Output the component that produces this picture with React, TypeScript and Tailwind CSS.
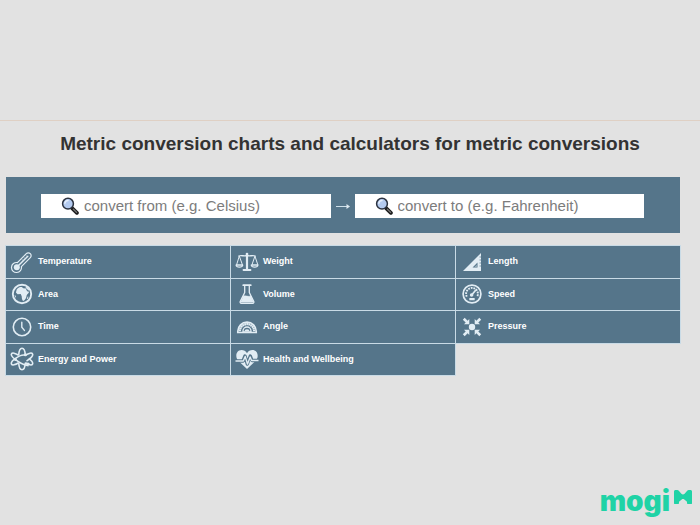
import { useState, ReactNode } from 'react'

interface Category {
  label: string
  href: string
  icon: ReactNode
}

const TemperatureIcon = () => (
  <svg viewBox="0 0 24 24" className="size-6" fill="none" stroke="currentColor" strokeLinecap="round">
    <path d="M16.300 3.700a2.800 2.800 0 0 1 4 4L11.400 16.600a5 5 0 1 1-4-4z" strokeWidth="1.200" />
    <path d="M17.800 6.200 8 16" strokeWidth="1.500" />
    <circle cx="6.800" cy="17.200" r="3" fill="currentColor" stroke="none" />
    <path d="m12.200 9.600 1 1M14.200 7.600l1 1M16.200 5.600l1 1" strokeWidth="0.600" />
  </svg>
)

const WeightIcon = () => (
  <svg viewBox="0 0 24 24" className="size-6" fill="none" stroke="currentColor" strokeLinecap="round" strokeLinejoin="round">
    <path d="M12 4v15" strokeWidth="2.200" />
    <circle cx="12" cy="4" r="1.300" fill="currentColor" stroke="none" />
    <path d="M3.800 6c3-1.400 5.400 1 8.200-.6 2.800 1.600 5.200-.8 8.200.6" strokeWidth="1.300" />
    <path d="M4.200 6.500 1.500 15h5.600zM19.800 6.500 16.900 15h5.600z" strokeWidth="1" />
    <path d="M1 15h6.800c-.5 2.800-6.300 2.800-6.800 0zM16.200 15H23c-.5 2.800-6.300 2.800-6.800 0z" strokeWidth="1.200" />
    <path d="M8.500 20h7" strokeWidth="1.800" />
  </svg>
)

const LengthIcon = () => (
  <svg viewBox="0 0 24 24" className="size-6" fill="currentColor" fillRule="evenodd">
    <path d="M21 3v18H3zM17.500 12.500 12.500 17.500h5z" />
    <path d="M21 7h-1.500M21 10h-1.500M21 13h-1.500M21 16h-1.500" stroke="#55758a" strokeWidth="0.700" />
    <path d="m16.800 14.500-2.300 2.500h2.300z" opacity="0.500" />
  </svg>
)

const AreaIcon = () => (
  <svg viewBox="0 0 24 24" className="size-6" fill="none">
    <circle cx="12" cy="12" r="9.200" stroke="currentColor" strokeWidth="1.900" />
    <path
      d="M6.800 7.300c1.500-1.800 3-2.300 5-2.200l1.500 1.200 2.500.3 1.300 2.700 1.900.5c-.1 1.500-1.500 2.300-2.300 3.400l-.5 2.400c-.7 1.900-1.800 3-3.100 3.400-1.200-1.500-1.300-3.200-1.400-4.800l-1-2.200-3.100.2-1.700-1.700z"
      fill="currentColor"
    />
    <path d="m17.700 14.500.8.200-.9 2.500-.8-.4zM4.500 13l1.500 1-.1 2z" fill="currentColor" />
    <path d="M15.800 5.300c1.400.6 2.500 1.700 3 3" stroke="currentColor" strokeWidth="1.400" />
  </svg>
)

const VolumeIcon = () => (
  <svg viewBox="0 0 24 24" className="size-6" fill="none" stroke="currentColor" strokeLinejoin="round" strokeLinecap="round">
    <path d="M8.200 3.200h7.600" strokeWidth="1.700" />
    <path d="M9.700 3.500v7L5.200 19.600c-.3.800.1 1.700 1 1.700h11.600c.9 0 1.300-.9 1-1.700L14.300 10.500v-7" strokeWidth="1.300" />
    <path d="M8.300 14.200c2.500-1.200 4.500.9 7.500-.2l2.800 6.200H5.500z" fill="currentColor" strokeWidth="0.500" />
  </svg>
)

const SpeedIcon = () => (
  <svg viewBox="0 0 24 24" className="size-6" fill="none" stroke="currentColor" strokeLinecap="round">
    <circle cx="12" cy="12" r="8.900" strokeWidth="1.700" />
    <path d="M6.800 14.600a5.900 5.900 0 1 1 10.400 0" strokeWidth="1.900" strokeDasharray="1.800 0.900" strokeLinecap="butt" />
    <path d="m11.700 13 3.700-4.500" strokeWidth="1.700" />
    <circle cx="11.600" cy="13" r="1.800" fill="currentColor" stroke="none" />
    <rect x="9.300" y="16" width="5.400" height="2.200" rx="0.500" fill="currentColor" stroke="none" />
  </svg>
)

const TimeIcon = () => (
  <svg viewBox="0 0 24 24" className="size-6" fill="none" stroke="currentColor" strokeLinecap="round">
    <circle cx="12" cy="12" r="8.700" strokeWidth="1.600" />
    <path d="M11.800 7.200v5l2.600 3.200" strokeWidth="1.400" />
  </svg>
)

const AngleIcon = () => (
  <svg viewBox="0 0 24 24" className="size-6" fill="none" stroke="currentColor">
    <path d="M2.800 17.500v-1.200a9.200 9.200 0 0 1 18.400 0v1.200z" strokeWidth="1.700" />
    <path d="M4.800 16.300a7.200 7.200 0 0 1 14.400 0" strokeWidth="2.300" strokeDasharray="1.800 0.300" />
    <path d="M8 17v-1a4 4 0 0 1 8 0v1z" strokeWidth="1.300" />
    <path d="M9.500 16.300a2.500 2 0 0 1 5 0z" fill="currentColor" stroke="none" />
  </svg>
)

const PressureIcon = () => (
  <svg viewBox="0 0 24 24" className="size-6" fill="currentColor">
    <circle cx="12" cy="12" r="3.200" />
    <path d="M9.300 9.300H4l1.700-1.700L2.800 4.700 4.700 2.800l2.900 2.900L9.300 4zM14.700 9.300V4l1.700 1.700 2.900-2.900 1.900 1.900-2.900 2.900L20 9.300zM9.300 14.700V20l-1.700-1.700-2.900 2.900-1.900-1.900 2.900-2.900L4 14.700zM14.700 14.700H20l-1.700 1.700 2.900 2.900-1.900 1.900-2.900-2.900-1.700 1.700z" />
  </svg>
)

const EnergyIcon = () => (
  <svg viewBox="0 0 24 24" className="size-6" fill="none" stroke="currentColor" strokeWidth="1.600">
    <path d="M8.700 8.200C8.900 4.200 10 1.200 12 1.200s3.100 3 3.300 7M8.700 15.800c.2 4 1.300 7 3.300 7s3.100-3 3.300-7" />
    <path d="M8.700 8.200C5 6 2.200 5.400 1.500 6.900c-1 1.800 2 4.600 6.500 7.500 4 2.600 7.800 4.200 10.500 4.300M15.300 15.800c3.700 2.200 6.500 2.800 7.200 1.300.8-1.600-1-3.600-3.600-5.500" />
    <path d="M15.300 8.200c3.700-2.200 6.500-2.800 7.200-1.300 1 1.800-2 4.600-6 7.200M8.700 15.800C5 18 2.200 18.600 1.500 17.100c-.8-1.600 1-3.600 3.600-5.500C8.300 9.300 12 7.200 15.300 8.200" />
    <circle cx="5.500" cy="12.500" r="1.500" fill="currentColor" stroke="none" />
    <circle cx="18" cy="17" r="1.600" fill="currentColor" stroke="none" />
    <circle cx="15.400" cy="7.800" r="1.500" fill="currentColor" stroke="none" />
  </svg>
)

const HealthIcon = () => (
  <svg viewBox="0 0 24 24" className="size-6" fill="none" strokeLinejoin="round">
    <path
      d="M12 22 3.500 14C-.2 10.300.8 3.200 6.500 3c2.300 0 4.300 1.100 5.500 3.200C13.200 4.100 15.200 3 17.500 3c5.700.2 6.700 7.300 3 11z"
      fill="currentColor"
    />
    <path d="M0 14h8l2-5 2.300 8 3-8 1.700 4.500H24" stroke="#55758a" strokeWidth="3.400" />
    <path d="M0.500 14h7.800l1.900-4.500 2.300 7.500 2.700-7 1.300 3.500h7" stroke="currentColor" strokeWidth="1.400" />
  </svg>
)

const SearchIcon = () => (
  <svg viewBox="0 0 18 18" className="size-[18px] shrink-0" fill="none" strokeLinecap="round">
    <path d="m11.300 11.300 4.600 4.500" stroke="#1c1c1c" strokeWidth="3.800" />
    <path d="m12.400 12.200 3.200 3.200" stroke="#777777" strokeWidth="1.300" />
    <circle cx="7" cy="6.700" r="5.400" fill="#b4cbf0" stroke="#2c3340" strokeWidth="1.500" />
    <path d="M3.900 6.200A3.400 3.400 0 0 1 7 3.500" stroke="#e6effc" strokeWidth="1.500" />
  </svg>
)

const categories: Category[] = [
  { label: 'Temperature', href: '#temperature', icon: <TemperatureIcon /> },
  { label: 'Weight', href: '#weight', icon: <WeightIcon /> },
  { label: 'Length', href: '#length', icon: <LengthIcon /> },
  { label: 'Area', href: '#area', icon: <AreaIcon /> },
  { label: 'Volume', href: '#volume', icon: <VolumeIcon /> },
  { label: 'Speed', href: '#speed', icon: <SpeedIcon /> },
  { label: 'Time', href: '#time', icon: <TimeIcon /> },
  { label: 'Angle', href: '#angle', icon: <AngleIcon /> },
  { label: 'Pressure', href: '#pressure', icon: <PressureIcon /> },
  { label: 'Energy and Power', href: '#energy', icon: <EnergyIcon /> },
  { label: 'Health and Wellbeing', href: '#health', icon: <HealthIcon /> },
]

interface UnitFieldProps {
  label: string
  placeholder: string
  value: string
  onChange: (value: string) => void
}

function UnitField({ label, placeholder, value, onChange }: UnitFieldProps) {
  return (
    <label className="flex h-6 min-w-0 flex-1 items-center gap-1 bg-white pl-5">
      <SearchIcon />
      <input
        type="text"
        aria-label={label}
        placeholder={placeholder}
        value={value}
        onChange={e => onChange(e.target.value)}
        className="min-w-0 flex-1 bg-transparent px-px text-[15px] leading-6 text-gray-800 outline-none placeholder:text-[#7c7c7c]"
      />
    </label>
  )
}

export default function App() {
  const [from, setFrom] = useState('')
  const [to, setTo] = useState('')

  return (
    <div className="flex min-h-screen flex-col bg-[#e2e2e2] pt-30 font-['Liberation_Sans',Arial,sans-serif]">
      <main className="border-t border-[#dfd0c4] pt-[11px]">
        <h1 className="text-center text-[19px] leading-6 font-bold text-[#333333]">
          Metric conversion charts and calculators for metric conversions
        </h1>

        <div className="mt-[21px] mr-5 ml-1.5">
          <form
            onSubmit={e => e.preventDefault()}
            className="flex items-center bg-[#55758a] pt-[17px] pr-9 pb-[15px] pl-[35px]"
          >
            <UnitField label="Convert from" placeholder="convert from (e.g. Celsius)" value={from} onChange={setFrom} />
            <svg viewBox="0 0 24 24" className="size-6 shrink-0" fill="none" stroke="#cfe0ea">
              <path d="M5 12.500h11" strokeWidth="1" />
              <path d="m15.500 10 3.500 2.500-3.500 2.500z" fill="#dfeaf1" stroke="none" />
            </svg>
            <UnitField label="Convert to" placeholder="convert to (e.g. Fahrenheit)" value={to} onChange={setTo} />
          </form>

          <nav className="mt-[13px] grid h-[129px] grid-cols-3 grid-rows-4 gap-px">
            {categories.map(c => (
              <a
                key={c.label}
                href={c.href}
                className="flex items-center gap-1 bg-[#55758a] pl-1 text-[9px] font-bold text-white outline outline-[#c9dbe6]"
              >
                <span className="text-[#e2edf4]">{c.icon}</span>
                {c.label}
              </a>
            ))}
          </nav>
        </div>
      </main>

      <footer className="mt-auto flex justify-end pr-2 pb-1.5">
        <a href="#mogi" className="flex items-start gap-1 text-[#1fd3a6]">
          <span className="font-[Inter,sans-serif] text-[28px] leading-9 font-black">mogi</span>
          <svg viewBox="0 0 18 15" className="mt-[7px] h-[15px] w-[18px]" fill="currentColor">
            <path d="M0 1.500C0 .7.700 0 1.500 0h1.800c.6 0 1.100.3 1.500.7l2.600 3c.9 1 2.300 1 3.200 0l2.600-3c.4-.4.9-.7 1.500-.7h1.800c.8 0 1.500.7 1.500 1.500V13.500c0 .3-.2.500-.5.500H14c-.6 0-1-.4-1-1v-1.200L10.300 9.500c-.8-.6-1.800-.6-2.600 0L5 11.800V13c0 .6-.4 1-1 1H.5c-.3 0-.5-.2-.5-.5z" />
          </svg>
        </a>
      </footer>
    </div>
  )
}
